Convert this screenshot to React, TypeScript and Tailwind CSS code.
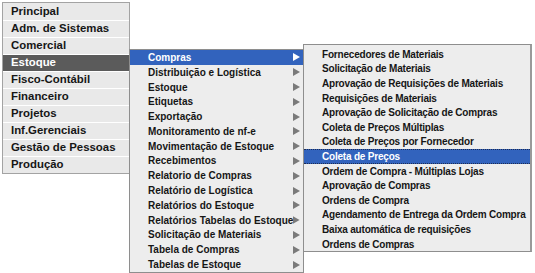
import React from 'react';

const mainItems = [
  'Principal',
  'Adm. de Sistemas',
  'Comercial',
  'Estoque',
  'Fisco-Contábil',
  'Financeiro',
  'Projetos',
  'Inf.Gerenciais',
  'Gestão de Pessoas',
  'Produção',
];

const estoqueItems = [
  'Compras',
  'Distribuição e Logística',
  'Estoque',
  'Etiquetas',
  'Exportação',
  'Monitoramento de nf-e',
  'Movimentação de Estoque',
  'Recebimentos',
  'Relatorio de Compras',
  'Relatório de Logística',
  'Relatórios do Estoque',
  'Relatórios Tabelas do Estoque',
  'Solicitação de Materiais',
  'Tabela de Compras',
  'Tabelas de Estoque',
];

const comprasItems = [
  'Fornecedores de Materiais',
  'Solicitação de Materiais',
  'Aprovação de Requisições de Materiais',
  'Requisições de Materiais',
  'Aprovação de Solicitação de Compras',
  'Coleta de Preços Múltiplas',
  'Coleta de Preços por Fornecedor',
  'Coleta de Preços',
  'Ordem de Compra - Múltiplas Lojas',
  'Aprovação de Compras',
  'Ordens de Compra',
  'Agendamento de Entrega da Ordem Compra',
  'Baixa automática de requisições',
  'Ordens de Compras',
];

const Arrow = ({ active }: { active?: boolean }) => (
  <svg width="7" height="8" viewBox="0 0 7 8" className={active ? 'text-white' : 'text-[#7a7a7a]'}>
    <path d="M0 0L7 4L0 8Z" fill="currentColor" />
  </svg>
);

export default function App() {
  return (
    <div className="relative w-[535px] h-[273px] bg-white pt-[2px] pl-[2px] font-['Liberation_Sans',Arial,sans-serif] text-[#161616]">
      {/* main menu */}
      <ul className="w-[128px] border border-[#a3a3a3] bg-white">
        {mainItems.map((item) => (
          <li
            key={item}
            className={`h-[17px] flex items-center pl-[8px] text-[11.4px] font-bold whitespace-nowrap border-t border-white first:border-t-0 ${
              item === 'Estoque' ? 'bg-[#5b5b5b] text-white' : 'bg-[#e9e9e9]'
            }`}
          >
            {item}
          </li>
        ))}
      </ul>

      {/* Estoque submenu */}
      <ul className="absolute left-[129px] top-[49px] w-[175px] border border-[#8e8e8e] bg-[#ededed]">
        {estoqueItems.map((item) => {
          const active = item === 'Compras';
          return (
            <li
              key={item}
              className={`h-[14.8px] flex items-center justify-between pl-[18px] pr-[3px] text-[10px] font-bold whitespace-nowrap ${
                active ? 'bg-[#3263bd] text-white' : ''
              }`}
            >
              <span>{item}</span>
              <Arrow active={active} />
            </li>
          );
        })}
      </ul>

      {/* Compras submenu */}
      <ul className="absolute left-[303px] top-[44px] w-[229px] border border-[#8e8e8e] border-r-2 border-r-[#9a9a9a] bg-[#ededed] pt-[2px]">
        {comprasItems.map((item) => {
          const active = item === 'Coleta de Preços';
          return (
            <li
              key={item}
              className={`h-[14.6px] flex items-center pl-[18px] text-[10px] font-bold tracking-[-0.2px] whitespace-nowrap ${
                active ? 'bg-[#3263bd] text-white border-y border-dotted border-[#1c2d55]' : ''
              }`}
            >
              {item}
            </li>
          );
        })}
      </ul>
    </div>
  );
}
